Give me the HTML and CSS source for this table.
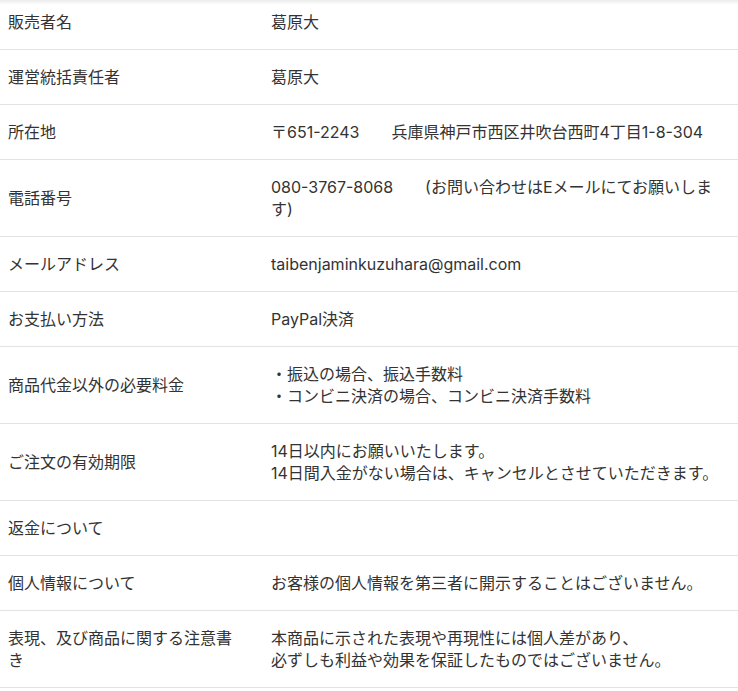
FILE: index.html
```html
<!DOCTYPE html>
<html lang="ja">
<head>
    <meta charset="UTF-8">
    <meta name="viewport" content="width=device-width, initial-scale=1.0">
    <title>特定商取引法に基づく表記</title>
    <link rel="stylesheet" href="styles.css">
</head>
<body>
    <div class="law-wrap">
        <table class="law-table">
            <colgroup>
                <col class="col-label">
                <col>
            </colgroup>
            <tbody>
                <tr>
                    <th>販売者名</th>
                    <td>葛原大</td>
                </tr>
                <tr>
                    <th>運営統括責任者</th>
                    <td>葛原大</td>
                </tr>
                <tr>
                    <th>所在地</th>
                    <td>〒651-2243　　兵庫県神戸市西区井吹台西町4丁目1-8-304</td>
                </tr>
                <tr>
                    <th>電話番号</th>
                    <td>080-3767-8068　　(お問い合わせはEメールにてお願いします)</td>
                </tr>
                <tr>
                    <th>メールアドレス</th>
                    <td>taibenjaminkuzuhara@gmail.com</td>
                </tr>
                <tr>
                    <th>お支払い方法</th>
                    <td>PayPal決済</td>
                </tr>
                <tr>
                    <th>商品代金以外の必要料金</th>
                    <td>・振込の場合、振込手数料<br>・コンビニ決済の場合、コンビニ決済手数料</td>
                </tr>
                <tr>
                    <th>ご注文の有効期限</th>
                    <td>14日以内にお願いいたします。<br>14日間入金がない場合は、キャンセルとさせていただきます。</td>
                </tr>
                <tr>
                    <th>返金について</th>
                    <td></td>
                </tr>
                <tr>
                    <th>個人情報について</th>
                    <td>お客様の個人情報を第三者に開示することはございません。</td>
                </tr>
                <tr>
                    <th>表現、及び商品に関する注意書き</th>
                    <td>本商品に示された表現や再現性には個人差があり、<br>必ずしも利益や効果を保証したものではございません。</td>
                </tr>
            </tbody>
        </table>
    </div>
</body>
</html>
```

FILE: styles.css
```css
body {
    margin: 0;
    padding: 0;
    background-color: #fff;
    color: #333;
    font-family: Inter, "Noto Sans CJK JP", sans-serif;
    font-size: 16px;
    line-height: 22px;
}
.law-wrap {
    overflow: hidden;
    background: linear-gradient(#ececec, #fff 5px);
}
.law-table {
    width: 100%;
    margin-top: -5px;
    border-collapse: collapse;
    table-layout: fixed;
}
.col-label {
    width: 271px;
}
.law-table th,
.law-table td {
    padding: 16px 8px 16px 0;
    border-bottom: 1px solid #e3e3e3;
    text-align: left;
    vertical-align: middle;
    font-weight: normal;
    height: 22px;
}
.law-table th {
    padding: 16px 32px 16px 8px;
}
```
